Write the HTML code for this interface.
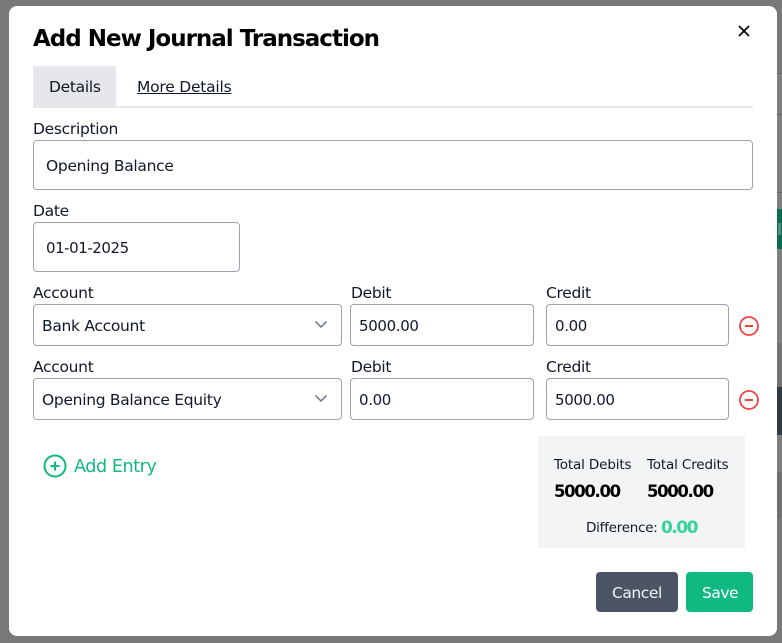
<!DOCTYPE html>
<html><head><meta charset="utf-8"><style>
*{box-sizing:border-box;margin:0;padding:0}
html,body{width:782px;height:643px;overflow:hidden;background:#777879}
body{position:relative;font-family:"DejaVu Sans","Liberation Sans",sans-serif;color:#111827}
.a{position:absolute}
.t{position:absolute;white-space:nowrap;font-size:15.500px;line-height:20px;letter-spacing:-.3px;color:#111827}
.n{font-size:15px;letter-spacing:-.35px}
.s{font-size:13.500px;letter-spacing:-.15px}
.b{font-size:16.500px;line-height:22px;font-weight:700;color:#000;letter-spacing:-1.350px}
.f{position:absolute;background:#fff;border:1px solid #9ca3af;border-radius:4px}
</style></head><body>
<div class="a" style="left:777px;top:74px;width:5px;height:269px;background:#808080"></div>
<div class="a" style="left:777px;top:343px;width:5px;height:44px;background:#737373"></div>
<div class="a" style="left:777px;top:435px;width:5px;height:37px;background:#7d7d7d"></div>
<div class="a" style="left:777px;top:472px;width:5px;height:46px;background:#6e6e6e"></div>
<div class="a" style="left:777px;top:73px;width:5px;height:1px;background:#666"></div>
<div class="a" style="left:777px;top:114px;width:5px;height:1px;background:#666"></div>
<div class="a" style="left:777px;top:192px;width:5px;height:1px;background:#666"></div>
<div class="a" style="left:777px;top:209px;width:5px;height:40px;background:#0b6b4f"></div>
<div class="a" style="left:778px;top:223px;width:3px;height:12px;background:#4d8f7b"></div>
<div class="a" style="left:777px;top:387px;width:5px;height:48px;background:#2f3943"></div>
<div class="a" style="left:9px;top:6px;width:768px;height:630px;background:#fff;border-radius:8px"></div>

<div class="t" style="left:33px;top:23px;font-size:23px;line-height:32px;font-weight:700;color:#000;letter-spacing:-1px">Add New Journal Transaction</div>
<svg class="a" style="left:736px;top:23px" width="16" height="16" viewBox="0 0 16 16"><path d="M3 3L13 13M13 3L3 13" stroke="#000" stroke-width="1.600" fill="none"/></svg>

<div class="a" style="left:33px;top:66px;width:83px;height:40px;background:#e5e7eb"></div>
<div class="t" style="left:49px;top:77px">Details</div>
<div class="t" style="left:137px;top:77px;text-decoration:underline;letter-spacing:-.22px">More Details</div>
<div class="a" style="left:33px;top:106px;width:720px;height:2px;background:#e5e7eb"></div>

<div class="t" style="left:33px;top:119px">Description</div>
<div class="f" style="left:33px;top:140px;width:720px;height:50px"></div>
<div class="t" style="left:46px;top:156px">Opening Balance</div>

<div class="t" style="left:33px;top:201px">Date</div>
<div class="f" style="left:33px;top:222px;width:207px;height:50px"></div>
<div class="t n" style="left:46px;top:238px;letter-spacing:-.45px">01-01-2025</div>

<div class="t" style="left:33px;top:283px">Account</div>
<div class="t" style="left:351px;top:283px">Debit</div>
<div class="t" style="left:546px;top:283px">Credit</div>
<div class="f" style="left:33px;top:304px;width:309px;height:42px"></div>
<div class="t" style="left:42px;top:316px">Bank Account</div>
<svg class="a" style="left:313px;top:318px" width="16" height="14" viewBox="0 0 16 14"><path d="M2.500 3.500L8 9L13.500 3.500" stroke="#6b7280" stroke-width="1.500" fill="none"/></svg>
<div class="f" style="left:350px;top:304px;width:184px;height:42px"></div>
<div class="t n" style="left:359px;top:316px">5000.00</div>
<div class="f" style="left:546px;top:304px;width:183px;height:42px"></div>
<div class="t n" style="left:555px;top:316px">0.00</div>
<svg class="a" style="left:739px;top:316px" width="20" height="20" viewBox="0 0 20 20"><circle cx="10" cy="10" r="9" stroke="#ef4444" stroke-width="1.800" fill="none"/><path d="M6 10H14" stroke="#ef4444" stroke-width="2"/></svg>

<div class="t" style="left:33px;top:357px">Account</div>
<div class="t" style="left:351px;top:357px">Debit</div>
<div class="t" style="left:546px;top:357px">Credit</div>
<div class="f" style="left:33px;top:378px;width:309px;height:42px"></div>
<div class="t" style="left:42px;top:390px">Opening Balance Equity</div>
<svg class="a" style="left:313px;top:392px" width="16" height="14" viewBox="0 0 16 14"><path d="M2.500 3.500L8 9L13.500 3.500" stroke="#6b7280" stroke-width="1.500" fill="none"/></svg>
<div class="f" style="left:350px;top:378px;width:184px;height:42px"></div>
<div class="t n" style="left:359px;top:390px">0.00</div>
<div class="f" style="left:546px;top:378px;width:183px;height:42px"></div>
<div class="t n" style="left:555px;top:390px">5000.00</div>
<svg class="a" style="left:739px;top:390px" width="20" height="20" viewBox="0 0 20 20"><circle cx="10" cy="10" r="9" stroke="#ef4444" stroke-width="1.800" fill="none"/><path d="M6 10H14" stroke="#ef4444" stroke-width="2"/></svg>

<svg class="a" style="left:43px;top:454px" width="24" height="24" viewBox="0 0 24 24"><circle cx="12" cy="12" r="10.500" stroke="#10b981" stroke-width="2" fill="none"/><path d="M12 7.500V16.500M7.500 12H16.500" stroke="#10b981" stroke-width="2"/></svg>
<div class="t" style="left:74px;top:455px;font-size:17.500px;line-height:24px;color:#10b981;letter-spacing:-.4px">Add Entry</div>

<div class="a" style="left:538px;top:436px;width:207px;height:112px;background:#f3f4f6"></div>
<div class="t s" style="left:554px;top:455px">Total Debits</div>
<div class="t s" style="left:647px;top:455px">Total Credits</div>
<div class="t b" style="left:554px;top:481px">5000.00</div>
<div class="t b" style="left:647px;top:481px">5000.00</div>
<div class="t s" style="left:586px;top:518px;letter-spacing:-.25px">Difference:</div>
<div class="t" style="left:661px;top:517px;font-size:17px;line-height:22px;font-weight:700;color:#34d399;letter-spacing:-1.500px">0.00</div>

<div class="a" style="left:596px;top:572px;width:82px;height:40px;background:#4b5563;border-radius:4px"></div>
<div class="t" style="left:612px;top:583px;color:#f3f4f6;letter-spacing:-.45px">Cancel</div>
<div class="a" style="left:686px;top:572px;width:67px;height:40px;background:#10b981;border-radius:4px"></div>
<div class="t" style="left:702px;top:583px;color:#fff;letter-spacing:-.5px">Save</div>
</body></html>
